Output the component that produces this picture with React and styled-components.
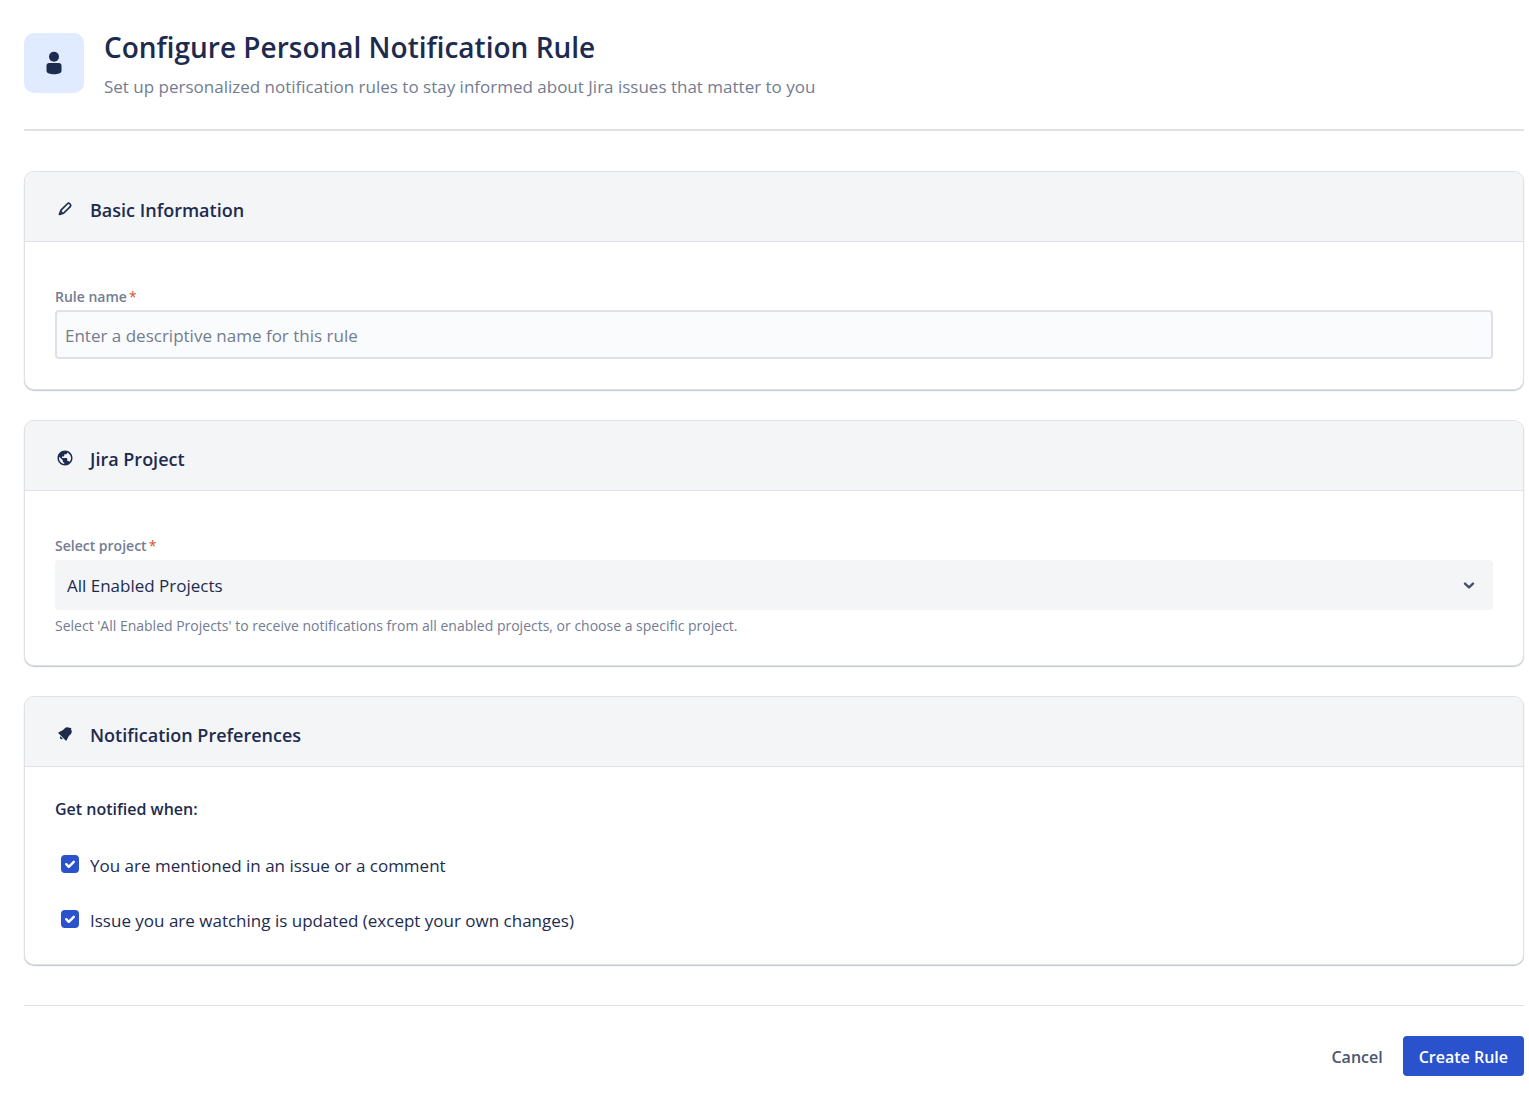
import React, { useState } from 'react';
import styled, { createGlobalStyle } from 'styled-components';
import { MdPublic } from 'react-icons/md';

const GlobalStyle = createGlobalStyle`
  * {
    box-sizing: border-box;
  }

  body {
    margin: 0;
    background: #fff;
    color: #1d2b4f;
    font-family: 'Segoe UI', 'Open Sans', 'Noto Sans', sans-serif;
    font-size: 17px;
    line-height: 24px;
  }

  button,
  input,
  select {
    font: inherit;
    color: inherit;
  }
`;

const Page = styled.main`
  padding: 27px 5px 20px 24px;
`;

const Header = styled.header`
  display: flex;
  align-items: center;
  gap: 20px;
  padding-bottom: 30px;
  margin-bottom: 40px;
  border-bottom: 2px solid #dfe1e6;
`;

const HeaderIcon = styled.div`
  display: flex;
  align-items: center;
  justify-content: center;
  width: 60px;
  height: 60px;
  border-radius: 10px;
  background: #e0ebff;
`;

const Title = styled.h1`
  margin: 0 0 8px;
  font-size: 28px;
  line-height: 40px;
  font-weight: 600;
`;

const Subtitle = styled.p`
  margin: 0;
  color: #737c92;
`;

const Card = styled.section`
  margin-bottom: 30px;
  border: 1px solid #dfe1e6;
  border-radius: 10px;
  background: #fff;
  box-shadow: 0 1px 1px rgba(9, 30, 66, 0.25);
  overflow: hidden;
`;

const CardHeader = styled.div`
  display: flex;
  align-items: center;
  gap: 15px;
  height: 70px;
  padding: 5px 30px 0;
  border-bottom: 1px solid #dfe1e6;
  background: #f4f5f7;
`;

const CardIcon = styled.span`
  display: flex;
  align-items: center;
  justify-content: center;
  width: 20px;
  height: 20px;
`;

const CardTitle = styled.h2`
  margin: 0;
  padding-top: 2px;
  font-size: 18px;
  line-height: 24px;
  font-weight: 600;
`;

const CardBody = styled.div`
  padding: 30px;
`;

const Field = styled.div`
  display: flex;
  flex-direction: column;
  padding-top: 15px;
`;

const Label = styled.label`
  margin-bottom: 3px;
  color: #737c92;
  font-size: 14px;
  line-height: 20px;
  font-weight: 600;
`;

const Required = styled.span`
  padding-left: 2px;
  color: #d2502a;
  font-weight: 400;
`;

const TextInput = styled.input`
  width: 100%;
  height: 49px;
  padding: 2px 8px 0;
  border: 2px solid #dfe1e6;
  border-radius: 4px;
  background: #fafbfc;
  outline: none;

  &::placeholder {
    color: #737c92;
    opacity: 1;
  }
`;

const SelectWrap = styled.div`
  display: grid;
  align-items: center;
  padding-top: 1px;

  > * {
    grid-area: 1 / 1;
  }

  > svg {
    justify-self: end;
    margin-right: 16px;
    pointer-events: none;
  }
`;

const Select = styled.select`
  width: 100%;
  height: 50px;
  padding: 2px 12px 0;
  border: 0;
  border-radius: 4px;
  background: #f4f5f7;
  appearance: none;
  outline: none;
`;

const Helper = styled.p`
  margin: 7px 0 0;
  color: #737c92;
  font-size: 14px;
  line-height: 18px;
`;

const GroupTitle = styled.h3`
  margin: 0 0 28px;
  font-size: 16px;
  line-height: 24px;
  font-weight: 600;
`;

const CheckList = styled.div`
  display: flex;
  flex-direction: column;
  gap: 25px;
`;

const CheckRow = styled.label`
  display: flex;
  align-items: center;
  gap: 11px;
  min-height: 30px;
  padding-left: 6px;
  cursor: pointer;
`;

const CheckText = styled.span`
  padding-top: 3px;
`;

const CheckBox = styled.span`
  display: grid;
  width: 18px;
  height: 18px;

  > * {
    grid-area: 1 / 1;
  }

  > svg {
    pointer-events: none;
  }
`;

const CheckInput = styled.input`
  width: 18px;
  height: 18px;
  margin: 0;
  border: 2px solid #dfe1e6;
  border-radius: 4px;
  background: #fafbfc;
  appearance: none;

  &:checked {
    border-color: #2952cc;
    background: #2952cc;
  }
`;

const Footer = styled.footer`
  display: flex;
  justify-content: flex-end;
  gap: 4px;
  margin-top: 40px;
  padding-top: 30px;
  border-top: 1px solid #dfe1e6;
`;

const Button = styled.button`
  height: 40px;
  padding: 1px 16px 0;
  border: 0;
  border-radius: 4px;
  background: ${(props) => (props.$primary ? '#2952cc' : 'transparent')};
  color: ${(props) => (props.$primary ? '#fff' : '#4a5671')};
  font-size: 16px;
  font-weight: 600;
  cursor: pointer;
`;

const PersonIcon = () => (
  <svg width="30" height="30" viewBox="0 0 24 24" fill="currentColor">
    <circle cx="12" cy="7" r="4" />
    <path d="M6 14c0-1.1.9-2 2-2h8c1.1 0 2 .9 2 2v4.4c0 3.4-12 3.4-12 0V14z" />
  </svg>
);

const EditIcon = () => (
  <svg width="20" height="20" viewBox="0 0 24 24" fill="none">
    <path
      d="M7.2 13.4l7.7-7.7a2 2 0 0 1 2.8 0l.6.6a2 2 0 0 1 0 2.8l-7.7 7.7a1.2 1.2 0 0 1-1.7 0l-1.7-1.7a1.2 1.2 0 0 1 0-1.7z"
      stroke="currentColor"
      strokeWidth="2"
    />
    <path d="M5.4 14.6l4 4-3.9.9a.9.9 0 0 1-1.1-1.1z" fill="currentColor" />
  </svg>
);

const BellIcon = () => (
  <svg width="20" height="20" viewBox="0 0 24 24" fill="currentColor">
    <path d="M6.485 17.669a2 2 0 0 0 2.829 0l-2.829-2.83a2 2 0 0 0 0 2.83zm4.897-12.191l-.725.725c-.782.782-2.21 1.813-3.206 2.311l-3.017 1.509c-.495.248-.584.774-.187 1.171l8.556 8.556c.398.396.922.313 1.171-.188l1.51-3.016c.494-.988 1.526-2.42 2.311-3.206l.725-.726a5.048 5.048 0 0 0 .64-6.356 1.01 1.01 0 1 0-1.354-1.494c-.023.025-.046.049-.066.075a5.043 5.043 0 0 0-6.357.639z" />
  </svg>
);

const ChevronIcon = () => (
  <svg width="16" height="16" viewBox="0 0 16 16" fill="none">
    <path
      d="M4 6.6l4 3.8 4-3.8"
      stroke="#42526e"
      strokeWidth="2.4"
      strokeLinecap="round"
      strokeLinejoin="round"
    />
  </svg>
);

const CheckIcon = () => (
  <svg width="18" height="18" viewBox="0 0 18 18" fill="none">
    <path
      d="M5.2 9.2l2.6 2.6 5-5"
      stroke="#fff"
      strokeWidth="2.4"
      strokeLinecap="round"
      strokeLinejoin="round"
    />
  </svg>
);

const Section = ({ icon, title, children }) => (
  <Card>
    <CardHeader>
      <CardIcon>{icon}</CardIcon>
      <CardTitle>{title}</CardTitle>
    </CardHeader>
    <CardBody>{children}</CardBody>
  </Card>
);

const Check = ({ checked, onChange, children }) => (
  <CheckRow>
    <CheckBox>
      <CheckInput type="checkbox" checked={checked} onChange={onChange} />
      {checked && <CheckIcon />}
    </CheckBox>
    <CheckText>{children}</CheckText>
  </CheckRow>
);

const App = () => {
  const [name, setName] = useState('');
  const [mentioned, setMentioned] = useState(true);
  const [watching, setWatching] = useState(true);

  return (
    <Page>
      <GlobalStyle />
      <Header>
        <HeaderIcon>
          <PersonIcon />
        </HeaderIcon>
        <div>
          <Title>Configure Personal Notification Rule</Title>
          <Subtitle>
            Set up personalized notification rules to stay informed about Jira issues that matter
            to you
          </Subtitle>
        </div>
      </Header>

      <Section icon={<EditIcon />} title="Basic Information">
        <Field>
          <Label htmlFor="rule-name">
            Rule name<Required>*</Required>
          </Label>
          <TextInput
            id="rule-name"
            placeholder="Enter a descriptive name for this rule"
            value={name}
            onChange={(e) => setName(e.target.value)}
          />
        </Field>
      </Section>

      <Section icon={<MdPublic size={18} />} title="Jira Project">
        <Field>
          <Label htmlFor="project">
            Select project<Required>*</Required>
          </Label>
          <SelectWrap>
            <Select id="project">
              <option>All Enabled Projects</option>
            </Select>
            <ChevronIcon />
          </SelectWrap>
          <Helper>
            Select 'All Enabled Projects' to receive notifications from all enabled projects, or
            choose a specific project.
          </Helper>
        </Field>
      </Section>

      <Section icon={<BellIcon />} title="Notification Preferences">
        <GroupTitle>Get notified when:</GroupTitle>
        <CheckList>
          <Check checked={mentioned} onChange={(e) => setMentioned(e.target.checked)}>
            You are mentioned in an issue or a comment
          </Check>
          <Check checked={watching} onChange={(e) => setWatching(e.target.checked)}>
            Issue you are watching is updated (except your own changes)
          </Check>
        </CheckList>
      </Section>

      <Footer>
        <Button type="button">Cancel</Button>
        <Button type="submit" $primary>
          Create Rule
        </Button>
      </Footer>
    </Page>
  );
};

export default App;
